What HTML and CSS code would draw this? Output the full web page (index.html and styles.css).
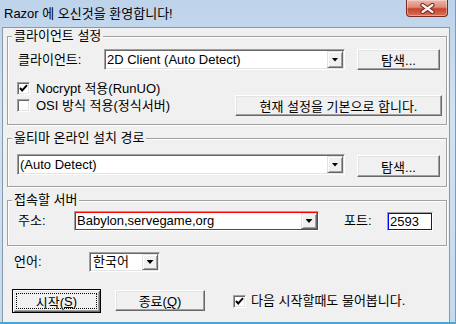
FILE: index.html
```html
<!DOCTYPE html>
<html lang="ko">
<head>
  <meta charset="UTF-8">
  <title>Razor</title>
  <link rel="stylesheet" href="styles.css">
</head>
<body>
  <div class="window">
    <div class="titlebar">
      <span class="title">Razor 에 오신것을 환영합니다!</span>
      <div class="close-btn">
        <svg width="15" height="11" viewBox="0 0 15 11">
          <path d="M2.5 2 L12.5 9 M12.5 2 L2.5 9" stroke="#6b2418" stroke-width="4.2" stroke-linecap="round"/>
          <path d="M2.5 2 L12.5 9 M12.5 2 L2.5 9" stroke="#f4f4f4" stroke-width="2.2" stroke-linecap="round"/>
        </svg>
      </div>
    </div>

    <div class="client">
      <!-- 클라이언트 설정 -->
      <fieldset class="group group-client">
        <legend>클라이언트 설정</legend>
        <div class="row">
          <span class="label label-client">클라이언트:</span>
          <div class="combo combo-client">
            <span class="combo-text">2D Client (Auto Detect)</span>
            <span class="drop"></span>
          </div>
          <button class="btn btn-browse">탐색...</button>
        </div>
        <div class="row options">
          <div class="checks">
            <div class="check">
              <span class="box">
                <svg width="9" height="9" viewBox="0 0 9 9"><polyline points="1,4 3.2,6.5 8,1.2" fill="none" stroke="#000" stroke-width="1.9"/></svg>
              </span>Nocrypt 적용(RunUO)
            </div>
            <div class="check"><span class="box"></span>OSI 방식 적용(정식서버)</div>
          </div>
          <button class="btn btn-default">현재 설정을 기본으로 합니다.</button>
        </div>
      </fieldset>

      <!-- 설치 경로 -->
      <fieldset class="group group-path">
        <legend>울티마 온라인 설치 경로</legend>
        <div class="row row-top">
          <div class="combo combo-path">
            <span class="combo-text">(Auto Detect)</span>
            <span class="drop"></span>
          </div>
          <button class="btn btn-browse btn-browse2">탐색...</button>
        </div>
      </fieldset>

      <!-- 접속할 서버 -->
      <fieldset class="group group-server">
        <legend>접속할 서버</legend>
        <div class="row row-top">
          <span class="label label-addr">주소:</span>
          <div class="combo combo-server">
            <span class="combo-text">Babylon,servegame,org</span>
            <span class="drop"></span>
          </div>
          <span class="label label-port">포트:</span>
          <div class="port">2593</div>
        </div>
      </fieldset>

      <div class="row lang-row">
        <span class="label label-lang">언어:</span>
        <div class="combo combo-lang">
          <span class="combo-text">한국어</span>
          <span class="drop"></span>
        </div>
      </div>

      <div class="row actions">
        <button class="btn btn-start"><span class="focus">시작(<u>S</u>)</span></button>
        <button class="btn btn-quit">종료(<u>Q</u>)</button>
        <div class="check check-ask">
          <span class="box">
            <svg width="9" height="9" viewBox="0 0 9 9"><polyline points="1,4 3.2,6.5 8,1.2" fill="none" stroke="#000" stroke-width="1.9"/></svg>
          </span>다음 시작할때도 물어봅니다.
        </div>
      </div>
    </div>
  </div>
</body>
</html>
```

FILE: styles.css
```css
/* Vista basic frame + classic controls */
:root {
  --face: #f0f0f0;
  --light: #e3e3e3;
  --shadow: #a0a0a0;
  --dark: #696969;
}
* {
  box-sizing: border-box;
}
body {
  margin: 0;
  width: 456px;
  height: 324px;
  overflow: hidden;
  font-family: "Liberation Sans", "Noto Sans CJK KR", sans-serif;
  font-size: 13px;
  color: #000;
}
.window {
  height: 324px;
  display: flex;
  flex-direction: column;
  padding: 0 5px 0 2px;
  background: linear-gradient(#bdd3ea, #d2e2f2 35%, #c6daee);
  border-right: 1px solid #7d9bbd;
  border-bottom: 2px solid #4ba5d4;
}
.titlebar {
  height: 27px;
  flex: none;
  display: flex;
  justify-content: space-between;
  align-items: flex-start;
}
.title {
  margin-left: 2px;
  line-height: 27px;
}
.close-btn {
  width: 42px;
  height: 17px;
  margin-right: 2px;
  display: flex;
  align-items: center;
  justify-content: center;
  border: 1px solid #7b2c22;
  border-top: none;
  border-radius: 0 0 4px 4px;
  background: linear-gradient(#ecb7ab, #de8a77 45%, #c7442c 55%, #d8725a);
  box-shadow: inset 0 0 0 1px rgba(255, 255, 255, 0.35);
}
.client {
  flex: 1;
  display: flex;
  flex-direction: column;
  padding-top: 1px;
  background: var(--face);
  border: 1px solid #8799ad;
  border-bottom: none;
}

/* group boxes */
.group {
  margin: 0 2px 0 4px;
  min-width: 0;
  border: 1px solid var(--shadow);
  box-shadow: 1px 1px 0 #fff, inset 1px 1px 0 #fff;
}
.group legend {
  padding: 0 2px;
  margin-left: -6px;
  line-height: 14px;
  background: var(--face);
}
.group-client {
  padding: 6px 4px 8px 10px;
}
.group-path {
  margin-top: 6px;
  padding: 9px 4px 9px 10px;
}
.group-server {
  margin-top: 6px;
  padding: 4px 4px 14px 10px;
}

.row {
  display: flex;
  align-items: center;
}
.row-top {
  align-items: flex-start;
}
.label {
  line-height: 20px;
}
.label-client { width: 86px; }
.label-addr { width: 56px; }
.label-port { width: 43px; margin-left: 25px; }
.label-lang { width: 75px; }

/* sunken combo boxes */
.combo {
  display: flex;
  align-items: stretch;
  padding: 1px;
  background: #fff;
  border: 1px solid;
  border-color: var(--shadow) #fff #fff var(--shadow);
  box-shadow: inset 1px 1px 0 var(--dark), inset -1px -1px 0 var(--light);
}
.combo-text {
  flex: 1;
  padding-left: 1px;
  line-height: 17px;
  white-space: nowrap;
  overflow: hidden;
}
.drop {
  width: 16px;
  flex: none;
  display: flex;
  align-items: center;
  justify-content: center;
  background: var(--face);
  border: 1px solid;
  border-color: var(--light) var(--dark) var(--dark) var(--light);
  box-shadow: inset 1px 1px 0 #fff, inset -1px -1px 0 var(--shadow);
}
.drop::after {
  content: "";
  width: 7px;
  height: 4px;
  background: #000;
  clip-path: polygon(0 0, 100% 0, 50% 100%);
}
.combo-client { width: 241px; height: 21px; }
.combo-path { width: 328px; height: 21px; margin-left: -1px; }
.combo-server {
  width: 245px;
  height: 20px;
  box-shadow: inset 0 0 0 1px #f00;
}
.combo-server .combo-text { line-height: 16px; }
.combo-lang { width: 71px; height: 20px; }
.combo-lang .combo-text { padding-left: 2px; line-height: 16px; }

.port {
  width: 46px;
  height: 19px;
  margin-top: 1px;
  padding: 0 2px;
  line-height: 17px;
  background: #fff;
  border: 1px solid;
  border-color: var(--shadow) #fff #fff var(--shadow);
  box-shadow: inset 0 0 0 1px #00f;
}

/* raised buttons */
.btn {
  font: inherit;
  color: #000;
  padding: 0;
  background: var(--face);
  border: 1px solid;
  border-color: #fff var(--dark) var(--dark) #fff;
  box-shadow: inset -1px -1px 0 var(--shadow), inset 1px 1px 0 var(--light);
}
.btn-browse {
  width: 83px;
  height: 21px;
  margin-left: 12px;
}
.btn-browse2 {
  height: 22px;
  margin-top: 1px;
}
.btn-default {
  width: 207px;
  height: 21px;
  margin: 15px 0 0 auto;
}
.options {
  margin-top: 10px;
  align-items: flex-start;
}
.checks {
  margin-left: -1px;
}
.check {
  display: flex;
  align-items: center;
  line-height: 17px;
  white-space: nowrap;
}
.box {
  width: 13px;
  height: 13px;
  margin-right: 6px;
  display: flex;
  align-items: center;
  justify-content: center;
  background: #fff;
  border: 1px solid;
  border-color: var(--shadow) #fff #fff var(--shadow);
  box-shadow: inset 1px 1px 0 var(--dark), inset -1px -1px 0 var(--light);
}

.lang-row {
  margin-top: 6px;
  padding-left: 11px;
}
.actions {
  margin-top: 17px;
  padding-left: 9px;
  align-items: flex-start;
}
.btn-start {
  width: 89px;
  height: 24px;
  padding: 3px;
  border: 1px solid #000;
  box-shadow: inset 1px 1px 0 #fff, inset -1px -1px 0 var(--dark),
    inset 2px 2px 0 var(--light), inset -2px -2px 0 var(--shadow);
}
.focus {
  display: flex;
  height: 100%;
  align-items: center;
  justify-content: center;
  border: 1px dotted #000;
}
.btn-quit {
  width: 90px;
  height: 21px;
  margin: 1px 0 0 14px;
}
.check-ask {
  margin: 4px 0 0 28px;
  line-height: 16px;
}
.check-ask .box {
  margin-right: 5px;
}
```
